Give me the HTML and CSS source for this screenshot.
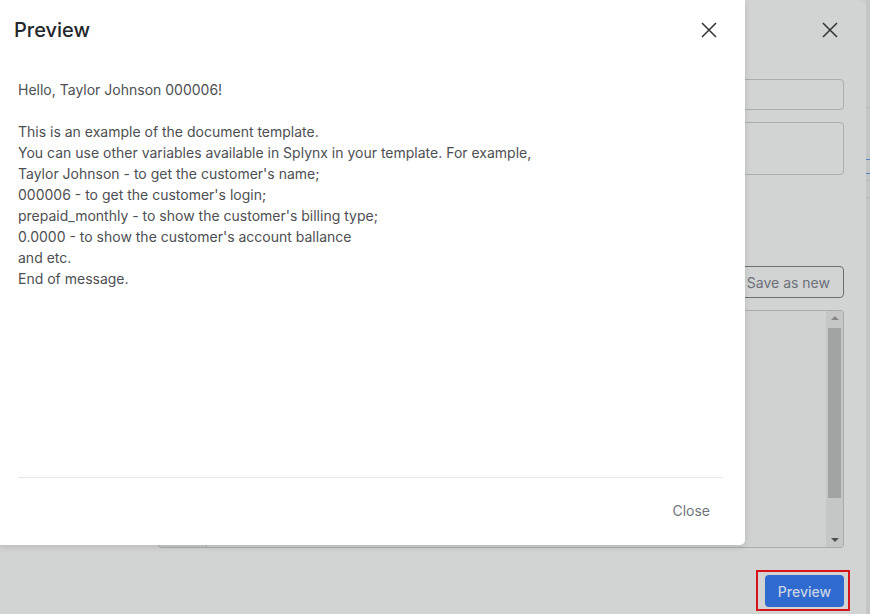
FILE: index.html
```html
<!DOCTYPE html>
<html>
<head>
<meta charset="utf-8">
<link rel="stylesheet" href="styles.css">
</head>
<body>
<div class="page">
  <div class="back-modal">
    <div class="back-header">
      <svg class="x-icon" width="18" height="18" viewBox="0 0 18 18"><path d="M2 2 L16 16 M16 2 L2 16" stroke="#333" stroke-width="1.5" fill="none"/></svg>
    </div>
    <div class="back-body">
      <div class="input"></div>
      <div class="textarea"></div>
      <div class="btn-row"><span class="btn-outline">Save as new</span></div>
      <div class="editor">
        <div class="gutter"><span class="ln">17</span></div>
        <div class="code"><span class="code-line">and etc.</span></div>
        <div class="scrollbar">
          <span class="arrow up"></span>
          <span class="thumb"></span>
          <span class="arrow down"></span>
        </div>
      </div>
      <div class="footer-row">
        <span class="highlight"><span class="btn-primary">Preview</span></span>
      </div>
    </div>
  </div>
  <div class="side-strip">
    <span class="strip-line l1"></span>
    <span class="strip-line blue l2"></span>
    <span class="strip-line blue l3"></span>
    <span class="strip-line l4"></span>
    <span class="strip-line l5"></span>
  </div>

  <div class="preview-modal">
    <div class="pm-header">
      <h2 class="pm-title">Preview</h2>
      <svg class="x-icon" width="18" height="18" viewBox="0 0 18 18"><path d="M2 2 L16 16 M16 2 L2 16" stroke="#333" stroke-width="1.5" fill="none"/></svg>
    </div>
    <div class="pm-body">
      <p>Hello, Taylor Johnson 000006!</p>
      <p class="blank">&nbsp;</p>
      <p>This is an example of the document template.</p>
      <p>You can use other variables available in Splynx in your template. For example,</p>
      <p>Taylor Johnson - to get the customer's name;</p>
      <p>000006 - to get the customer's login;</p>
      <p>prepaid_monthly - to show the customer's billing type;</p>
      <p>0.0000 - to show the customer's account ballance</p>
      <p>and etc.</p>
      <p>End of message.</p>
    </div>
    <div class="pm-footer">
      <span class="pm-close">Close</span>
    </div>
  </div>
</div>
</body>
</html>
```

FILE: styles.css
```css
* { box-sizing: border-box; }
html, body { margin: 0; padding: 0; }
body {
  font-family: Inter, "Noto Sans", sans-serif;
  width: 870px;
  height: 614px;
  overflow: hidden;
  background: #c8c9c9;
}
.page {
  position: relative;
  display: flex;
  width: 870px;
  height: 614px;
}
.back-modal {
  width: 866px;
  height: 614px;
  background: #d2d3d3;
  border-top-right-radius: 6px;
  display: flex;
  flex-direction: column;
}
.back-header {
  height: 60px;
  display: flex;
  align-items: center;
  justify-content: flex-end;
  padding-right: 27px;
}
.x-icon { display: block; }
.back-body {
  padding: 19px 22px 0 158px;
  display: flex;
  flex-direction: column;
}
.input {
  height: 31px;
  border: 1px solid #a9aeb2;
  border-radius: 4px;
}
.textarea {
  margin-top: 12px;
  height: 53px;
  border: 1px solid #a9aeb2;
  border-radius: 4px;
}
.btn-row {
  margin-top: 91px;
  display: flex;
  justify-content: flex-end;
}
.btn-outline {
  height: 32px;
  padding: 0 13px 0 16px;
  border: 1px solid #6b7075;
  border-radius: 4px;
  font-size: 14px;
  color: #6b7178;
  display: flex;
  align-items: center;
  white-space: nowrap;
}
.editor {
  margin-top: 12px;
  height: 238px;
  border: 1px solid #aaacac;
  border-radius: 3px;
  display: flex;
  background: #d0d1d1;
  overflow: hidden;
}
.gutter {
  width: 48px;
  background: #c9cbcb;
  border-right: 1px solid #b4b6b6;
  display: flex;
  flex-direction: column;
  justify-content: flex-end;
  align-items: flex-end;
  padding: 0 14px 0 0;
}
.ln, .code-line {
  font-family: "Liberation Mono", monospace;
  font-size: 12px;
  line-height: 13px;
  color: #444;
}
.ln { color: #888; }
.code {
  flex: 1;
  display: flex;
  flex-direction: column;
  justify-content: flex-end;
  padding-left: 8px;
}
.scrollbar {
  width: 17px;
  background: #c5c6c6;
  display: flex;
  flex-direction: column;
  align-items: center;
  padding: 5px 0 5px;
}
.arrow {
  width: 0; height: 0;
  border-left: 4px solid transparent;
  border-right: 4px solid transparent;
}
.arrow.up { border-bottom: 4px solid #858585; margin-bottom: 8px; }
.arrow.down { border-top: 4px solid #505050; margin-top: auto; }
.thumb {
  width: 13px;
  height: 170px;
  background: #a2a3a3;
}
.footer-row {
  margin-top: 22px;
  display: flex;
  justify-content: flex-end;
  margin-right: -6px;
}
.highlight {
  display: flex;
  border: 2px solid #d8141b;
  padding: 3px 4px 2px 7px;
}
.btn-primary {
  width: 79px;
  height: 32px;
  border-radius: 4px;
  background: #2f6ace;
  color: #c7d3e6;
  font-size: 14px;
  font-weight: 500;
  display: flex;
  align-items: center;
  justify-content: center;
}
.side-strip {
  flex: 1;
  position: relative;
  background: #c4c5c5;
}
.strip-line {
  position: absolute;
  left: 0; right: 0;
  height: 1px;
  background: #b6b8b8;
}
.strip-line.blue { background: #5a7fc0; }
.l1 { top: 107px; }
.l2 { top: 159px; }
.l3 { top: 173px; }
.l4 { top: 180px; }
.l5 { top: 197px; }

.preview-modal {
  position: absolute;
  left: 0; top: 0;
  width: 745px;
  height: 545px;
  background: #fff;
  border-bottom-right-radius: 5px;
  box-shadow: 0 2px 6px rgba(0,0,0,0.12);
  display: flex;
  flex-direction: column;
}
.pm-header {
  height: 60px;
  display: flex;
  align-items: center;
  justify-content: space-between;
  padding: 0 27px 0 14px;
}
.pm-title {
  margin: 0;
  font-size: 20px;
  font-weight: 500;
  color: #23262a;
}
.pm-body {
  flex: 1;
  padding: 19px 22px 0 18px;
  font-size: 14px;
  line-height: 21px;
  color: #4d4f52;
}
.pm-body p { margin: 0; }
.pm-footer {
  margin: 0 22px 0 18px;
  border-top: 1px solid #e6e7e8;
  height: 68px;
  display: flex;
  align-items: center;
  justify-content: flex-end;
  padding-right: 13px;
  padding-bottom: 3px;
}
.pm-close {
  font-size: 14px;
  color: #6f757b;
}
```
